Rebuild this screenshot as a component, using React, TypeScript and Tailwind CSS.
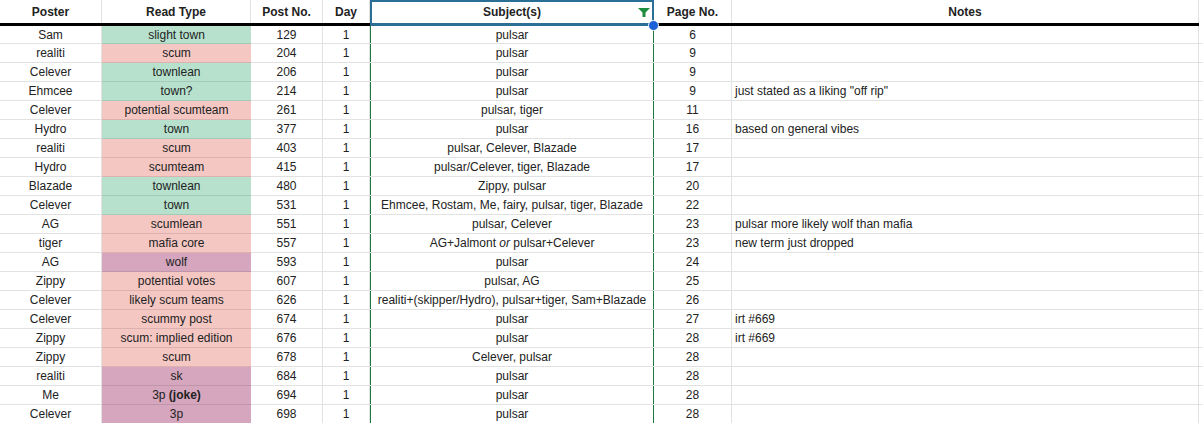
import React from "react";

const G = "bg-[#b7e1cd]", R = "bg-[#f4c7c3]", P = "bg-[#d5a6bd]";
type Row = [string, React.ReactNode, string, string, React.ReactNode, string, string];

const rows: Row[] = [
  ["Sam", "slight town", "129", G, "pulsar", "6", ""],
  ["realiti", "scum", "204", R, "pulsar", "9", ""],
  ["Celever", "townlean", "206", G, "pulsar", "9", ""],
  ["Ehmcee", "town?", "214", G, "pulsar", "9", 'just stated as a liking "off rip"'],
  ["Celever", "potential scumteam", "261", R, "pulsar, tiger", "11", ""],
  ["Hydro", "town", "377", G, "pulsar", "16", "based on general vibes"],
  ["realiti", "scum", "403", R, "pulsar, Celever, Blazade", "17", ""],
  ["Hydro", "scumteam", "415", R, "pulsar/Celever, tiger, Blazade", "17", ""],
  ["Blazade", "townlean", "480", G, "Zippy, pulsar", "20", ""],
  ["Celever", "town", "531", G, "Ehmcee, Rostam, Me, fairy, pulsar, tiger, Blazade", "22", ""],
  ["AG", "scumlean", "551", R, "pulsar, Celever", "23", "pulsar more likely wolf than mafia"],
  ["tiger", "mafia core", "557", R, <span>AG+Jalmont <i className="italic">or</i> pulsar+Celever</span>, "23", "new term just dropped"],
  ["AG", "wolf", "593", P, "pulsar", "24", ""],
  ["Zippy", "potential votes", "607", R, "pulsar, AG", "25", ""],
  ["Celever", "likely scum teams", "626", R, "realiti+(skipper/Hydro), pulsar+tiger, Sam+Blazade", "26", ""],
  ["Celever", "scummy post", "674", R, "pulsar", "27", "irt #669"],
  ["Zippy", "scum: implied edition", "676", R, "pulsar", "28", "irt #669"],
  ["Zippy", "scum", "678", R, "Celever, pulsar", "28", ""],
  ["realiti", "sk", "684", P, "pulsar", "28", ""],
  ["Me", <span>3p <b>(joke)</b></span>, "694", P, "pulsar", "28", ""],
  ["Celever", "3p", "698", P, "pulsar", "28", ""],
];

const cell = "flex items-center justify-center border-r border-[#e2e2e2] whitespace-nowrap overflow-hidden";

export default function App() {
  return (
    <div className="w-[1203px] h-[423px] overflow-hidden bg-white text-[12px] text-[#222222] font-['Liberation_Sans',Arial,sans-serif]">
      <div className="flex h-[26px] font-bold w-[1199px] border-b-[3px] border-black box-border">
        <div className={`${cell} w-[102px]`}>Poster</div>
        <div className={`${cell} w-[149px]`}>Read Type</div>
        <div className={`${cell} w-[72px]`}>Post No.</div>
        <div className={`${cell} w-[47px]`}>Day</div>
        <div className="relative flex items-center justify-center w-[284px]">
          Subject(s)
          <div className="absolute left-0 top-0 right-0 -bottom-[3px] border-2 border-b-[3px] border-[#2b6f94]" />
          <svg viewBox="0 0 12 9" className="absolute right-[4px] top-[8px] w-[12px] h-[9px]">
            <path d="M0 0h12L7.5 4.5V9h-3V4.5z" fill="#1e8e3e" />
          </svg>
          <div className="absolute -right-[5px] top-[20px] w-[9px] h-[9px] rounded-full bg-[#1a62d6] border border-white box-content z-10" />
        </div>
        <div className={`${cell} w-[78px]`}>Page No.</div>
        <div className={`${cell} flex-1`}>Notes</div>
      </div>
      {rows.map((r, i) => (
        <div key={i} className={`flex box-border border-b border-[#e2e2e2] ${i === 0 ? "h-[18px]" : "h-[19px]"}`}>
          <div className={`${cell} w-[102px]`}>{r[0]}</div>
          <div className={`flex items-center justify-center w-[149px] -mb-px border-b border-black/10 whitespace-nowrap ${r[3]}`}>{r[1]}</div>
          <div className={`${cell} w-[72px]`}>{r[2]}</div>
          <div className={`${cell} w-[47px]`}>1</div>
          <div className="flex items-center justify-center w-[284px] border-x border-[#1e7a45] whitespace-nowrap">{r[4]}</div>
          <div className={`${cell} w-[78px]`}>{r[5]}</div>
          <div className="flex items-center w-[467px] pl-[3px] border-r border-[#e2e2e2] whitespace-nowrap">{r[6]}</div>
        </div>
      ))}
    </div>
  );
}
